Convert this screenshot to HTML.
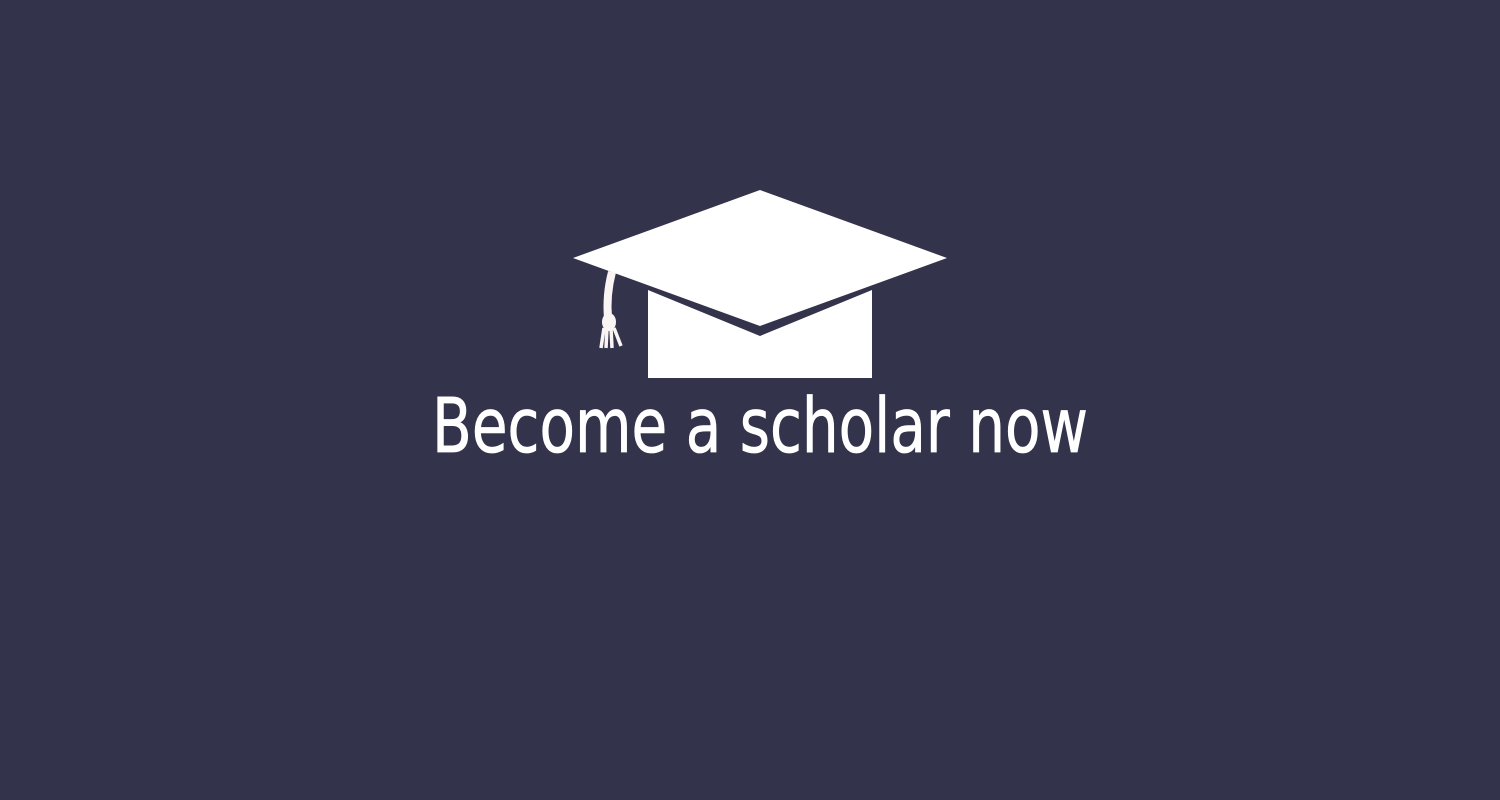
<!DOCTYPE html>
<html><head><meta charset="utf-8"><style>
html,body{margin:0;padding:0;width:1500px;height:800px;overflow:hidden;background:#33334b;}
svg{display:block}
</style></head><body>
<svg width="1500" height="800" viewBox="0 0 1500 800" xmlns="http://www.w3.org/2000/svg">
<rect width="1500" height="800" fill="#33334b"/>
<polygon points="648,290 760,336 872,290 872,378 648,378" fill="#fff"/>
<polygon points="760,190 947,258 760,326 573,258" fill="#fff"/>
<path d="M612,272 Q606,295 608,318" stroke="#fbf4f4" stroke-width="8" fill="none"/>
<ellipse cx="609" cy="322" rx="7" ry="9" fill="#fbf4f4"/>
<path d="M604,328 L601,348 M607,328 L606,348 M611,328 L612,348 M614,328 L621,346" stroke="#fbf4f4" stroke-width="3.5" fill="none"/>
<text x="432" y="452" textLength="656" lengthAdjust="spacingAndGlyphs" font-family="DejaVu Sans, sans-serif" font-size="76" fill="#fff" stroke="#fff" stroke-width="0.8">Become a scholar now</text>
</svg>
</body></html>
